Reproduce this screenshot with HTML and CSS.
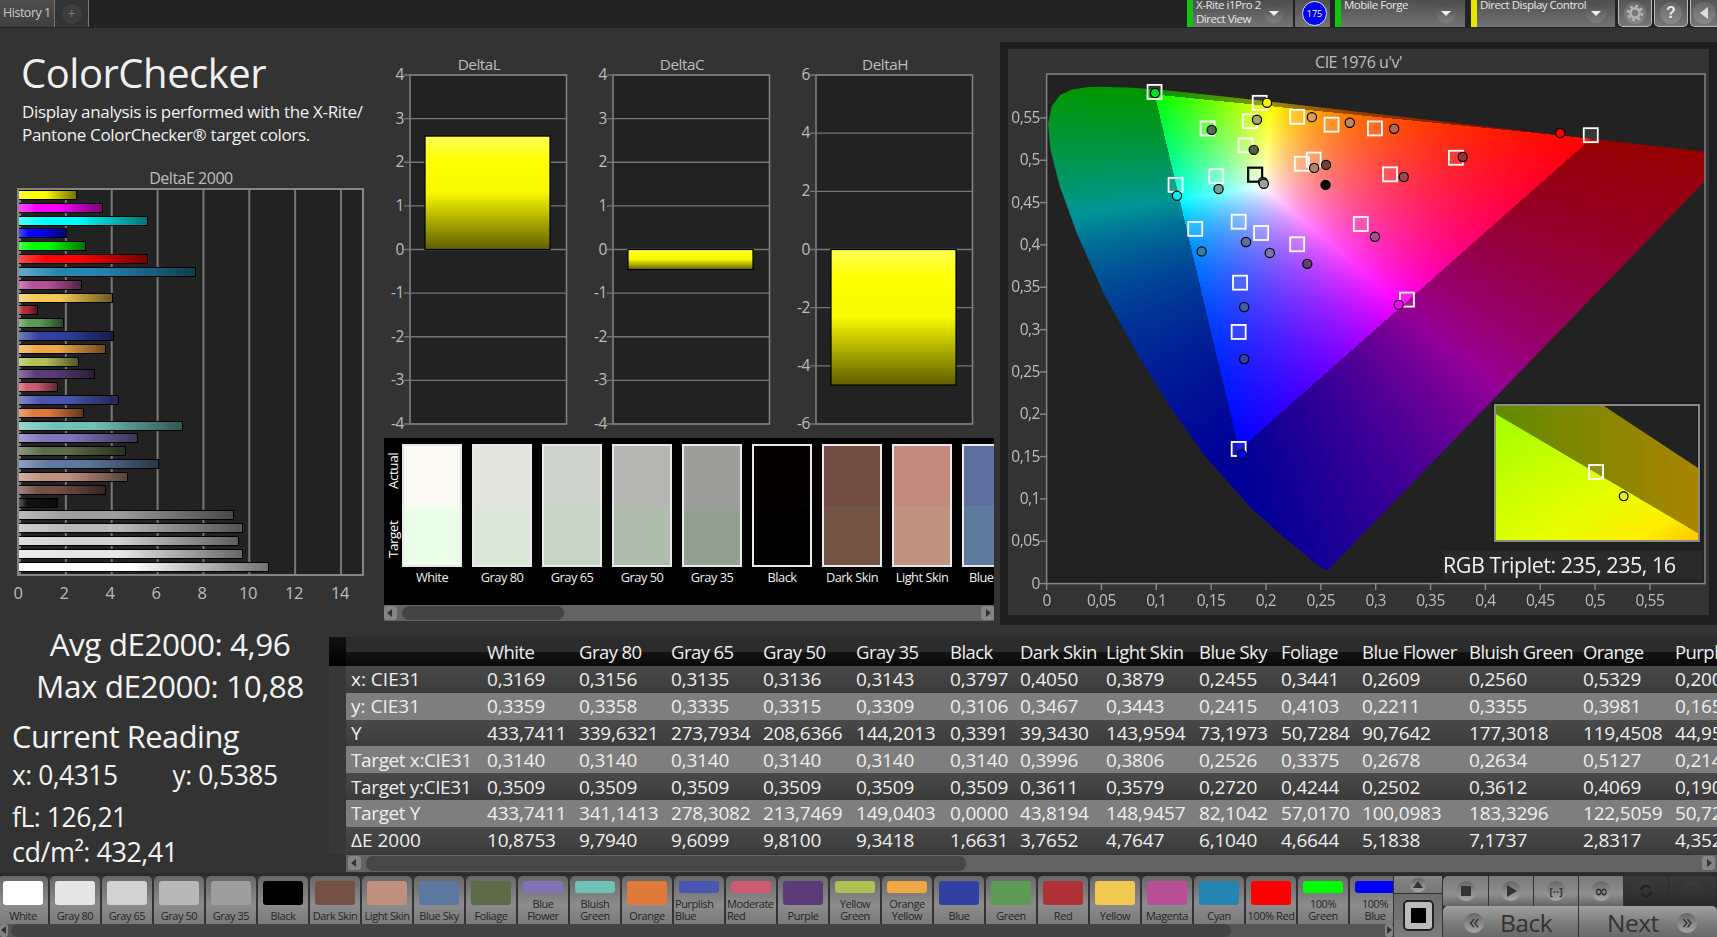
FILE: index.html
```html
<!DOCTYPE html>
<html lang="en">
<head>
    <meta charset="UTF-8">
    <title>ColorChecker</title>
    <link rel="stylesheet" href="styles.css">
</head>
<body>
    <header class="topbar">
        <div class="tabs">
            <div class="tab">History 1</div>
            <div class="tab-add"><span>+</span></div>
        </div>
        <div class="top-controls">
            <div class="drop drop-device stripe-green">
                <span>X-Rite i1Pro 2<br>Direct View</span>
                <i class="drop-btn"></i>
            </div>
            <div class="badge-box"><span class="badge">175</span></div>
            <div class="drop drop-forge stripe-green">
                <span>Mobile Forge</span>
                <i class="drop-btn"></i>
            </div>
            <div class="drop drop-display stripe-yellow">
                <span>Direct Display Control</span>
                <i class="drop-btn"></i>
            </div>
            <button class="tool-btn">
                <i class="tool-circle">
                    <svg width="18" height="18" viewBox="0 0 18 18">
                        <circle cx="9" cy="9" r="4.6" fill="none" stroke="#b4b4b4" stroke-width="2.6"/>
                        <circle cx="9" cy="9" r="7" fill="none" stroke="#b4b4b4" stroke-width="2.6" stroke-dasharray="2.9 2.6"/>
                    </svg>
                </i>
            </button>
            <button class="tool-btn"><i class="tool-circle help">?</i></button>
            <button class="tool-btn tool-last">
                <i class="tool-circle">
                    <svg width="12" height="14" viewBox="0 0 12 14"><path d="M10 1 L2 7 L10 13 Z" fill="#ddd"/></svg>
                </i>
            </button>
        </div>
    </header>

    <main class="workspace">
        <section class="intro">
            <h1>ColorChecker</h1>
            <p class="intro-text">Display analysis is performed with the X-Rite/<br>Pantone ColorChecker® target colors.</p>
            <h2 class="chart-title">DeltaE 2000</h2>
            <div class="de-plot" id="dePlot"></div>
            <div class="de-axis">
                <span>0</span><span>2</span><span>4</span><span>6</span><span>8</span><span>10</span><span>12</span><span>14</span>
            </div>
        </section>

        <section class="middle">
            <div class="delta-row" id="deltaRow"></div>
            <div class="patches">
                <div class="patch-side"><span>Actual</span><span>Target</span></div>
                <div class="patch-row" id="patchRow"></div>
            </div>
            <div class="scrollbar sb-patches">
                <i class="sb-btn sb-left"></i><i class="sb-thumb"></i><i class="sb-fill"></i><i class="sb-btn sb-right"></i>
            </div>
        </section>

        <section class="cie-outer">
            <div class="cie-panel">
                <div class="cie-title">CIE 1976 u'v'</div>
                <canvas id="gamut" class="gamut" width="658" height="510"></canvas>
                <svg id="cieSvg" class="cie-svg" width="701" height="566" viewBox="0 0 701 566"></svg>
                <div class="triplet">RGB Triplet: 235, 235, 16</div>
            </div>
        </section>
    </main>

    <section class="lower">
        <div class="readouts">
            <div class="avg">Avg dE2000: 4,96</div>
            <div class="max">Max dE2000: 10,88</div>
            <div class="current">Current Reading</div>
            <div class="xy"><span>x: 0,4315</span><span>y: 0,5385</span></div>
            <div class="fl">fL: 126,21</div>
            <div class="cd">cd/m²: 432,41</div>
        </div>
        <div class="table-wrap">
            <table class="data-table">
                <colgroup id="tableCols"></colgroup>
                <thead id="tableHead"></thead>
                <tbody id="tableBody"></tbody>
            </table>
            <div class="scrollbar sb-table">
                <i class="sb-btn sb-left"></i><i class="sb-thumb"></i><i class="sb-fill"></i><i class="sb-btn sb-right"></i>
            </div>
        </div>
    </section>

    <footer class="footer">
        <div class="strip-area">
            <div class="strip" id="strip"></div>
            <div class="scrollbar sb-strip">
                <i class="sb-btn sb-left"></i><i class="sb-thumb"></i><i class="sb-fill"></i><i class="sb-btn sb-right"></i>
            </div>
        </div>
        <div class="size-panel">
            <div class="size-up"><i class="round small"><svg width="10" height="7" viewBox="0 0 10 7"><path d="M5 0 L10 7 L0 7 Z" fill="#333"/></svg></i></div>
            <div class="size-knob"><div class="knob"><i></i></div></div>
        </div>
        <div class="nav-panel">
            <div class="transport">
                <div class="cell"><i class="round"><svg width="10" height="10"><rect width="10" height="10" fill="#333"/></svg></i></div>
                <div class="cell"><i class="round"><svg width="11" height="12" viewBox="0 0 11 12"><path d="M1 0 L11 6 L1 12 Z" fill="#333"/></svg></i></div>
                <div class="cell"><i class="round bracket">[··]</i></div>
                <div class="cell"><i class="round infinity">∞</i></div>
                <div class="cell cell-dark"><i class="round round-dark">
                    <svg width="14" height="14" viewBox="0 0 14 14"><path d="M2 6 A5 5 0 0 1 11 4 M12 8 A5 5 0 0 1 3 10" fill="none" stroke="#222" stroke-width="2.4"/></svg>
                </i></div>
                <div class="cell cell-dark"><i class="round round-dark"></i></div>
            </div>
            <div class="steps">
                <div class="step step-back"><i class="round chev">«</i><span>Back</span></div>
                <div class="step step-next"><span>Next</span><i class="round chev">»</i></div>
            </div>
        </div>
    </footer>

    <script>
        // top to bottom, value is the pixel where the bar ends
        const deBars = [
            ['#ffff00', 76], ['#ff00ff', 102], ['#00ffff', 147], ['#0000ff', 66], ['#00ff00', 85], ['#ff0000', 147],
            ['#2585b0', 195], ['#b85098', 81], ['#f2c850', 112], ['#b03038', 37], ['#5d9a55', 63], ['#3040a0', 113],
            ['#f0a845', 105], ['#b0c055', 78], ['#5c3c78', 94], ['#d05a70', 57], ['#4a57b0', 118], ['#e07a3a', 83],
            ['#70c0b8', 182], ['#8272b8', 137], ['#5c6b47', 125], ['#5d78a0', 158], ['#c0907f', 127], ['#755045', 105],
            ['#111111', 57], ['#9e9e9e', 233], ['#b9b9b9', 242], ['#d2d2d2', 238], ['#e6e6e6', 242], ['#ffffff', 268]
        ];
        document.getElementById('dePlot').innerHTML = deBars.map(b =>
            `<div class="de-bar" style="width:${b[1] - 18}px;background-color:${b[0]}"></div>`).join('');

        function renderDelta(name, max, barTop, barBottom) {
            const y = v => 47 + (max - v) * 349 / (2 * max);
            const step = max > 4 ? 2 : 1;
            let out = `<text class="dl-title" x="94" y="42">${name}</text>`;
            out += '<rect class="dl-frame" x="25" y="47" width="156.5" height="349"/>';
            for (let v = max; v >= -max; v -= step) {
                out += `<line class="dl-line" x1="19" x2="181.5" y1="${y(v)}" y2="${y(v)}"/>`;
                out += `<text class="dl-label" x="19" y="${y(v) + 5}">${v}</text>`;
            }
            out += `<rect x="40" y="${y(barTop)}" width="125" height="${y(barBottom) - y(barTop)}" fill="url(#yellowBar)" stroke="#000" stroke-width="1.2"/>`;
            return `<svg class="delta-chart" width="203" height="410">${out}</svg>`;
        }
        document.getElementById('deltaRow').innerHTML =
            `<svg width="0" height="0" class="defs"><defs><linearGradient id="yellowBar" x1="0" y1="0" x2="0" y2="1">
                <stop offset="0" stop-color="#ffff55"/><stop offset=".22" stop-color="#ffff00"/>
                <stop offset=".5" stop-color="#f8f800"/><stop offset="1" stop-color="#5e5e00"/>
            </linearGradient></defs></svg>` +
            renderDelta('DeltaL', 4, 2.6, 0) + renderDelta('DeltaC', 4, 0, -0.46) + renderDelta('DeltaH', 6, 0, -4.66);

        const patches = [
            ['White', '#fbfaf4', '#ecffe9'], ['Gray 80', '#e4e5df', '#dbe8d8'], ['Gray 65', '#cfd1cd', '#c6d5c3'],
            ['Gray 50', '#b6b7b4', '#aebdac'], ['Gray 35', '#9d9d9c', '#94a092'], ['Black', '#070202', '#000000'],
            ['Dark Skin', '#734c43', '#735445'], ['Light Skin', '#c48a7e', '#be947e'], ['Blue Sky', '#5f6ea0', '#5d7c9b']
        ];
        document.getElementById('patchRow').innerHTML = patches.map(p => `
            <div class="patch">
                <div class="patch-box"><i style="background:${p[1]}"></i><i style="background:${p[2]}"></i></div>
                <div class="patch-name">${p[0]}</div>
            </div>`).join('');

        // CIE diagram. Positions of the markers read in panel pixels
        const sx = z => z / 2.187 - 8;
        const sy = z => z / 2.658 - 9;
        const U = u => 38.6 + 1097 * u;
        const V = v => 534.6 - 846.7 * v;
        const squares = [[338,138],[568,167],[650,204],[725,225],[820,235],[454,235],[546,216],[537,280],[1292,253],[997,313],
            [686,318],[660,329],[853,357],[473,362],[384,385],[427,502],[522,483],[571,513],[789,489],[650,543],[525,645],
            [890,690],[522,776],[522,1087]];
        const dots = [[339,141,'#00e020'],[584,167,'#f0f000'],[682,205,'#d8a050'],[765,220,'#c08858'],[862,236,'#b86848'],
            [463,239,'#507050'],[562,212,'#a8a860'],[555,292,'#506040'],[1225,247,'#f00000'],[1012,311,'#a03030'],[713,332,'#704040'],
            [687,340,'#b08070'],[883,364,'#a04850'],[575,377,'#505050'],[577,382,'#a0a0a0'],[478,396,'#70a098'],[387,414,'#00f0f0'],
            [712,385,'#000000'],[820,523,'#a05090'],[538,537,'#607098'],[441,562,'#3080a0'],[590,566,'#7878a8'],[672,595,'#604070'],
            [534,710,'#4060a0'],[872,704,'#ff00ff'],[534,848,'#3040a0'],[529,1102,'#0000f0']];

        let cie = `<defs>
            <linearGradient id="insetBright" x1="0" y1="0" x2="1" y2="1">
                <stop offset="0" stop-color="#a2ff00"/><stop offset=".6" stop-color="#e6ff00"/><stop offset=".85" stop-color="#ffee00"/><stop offset="1" stop-color="#ffc400"/>
            </linearGradient>
            <linearGradient id="insetDark" x1="0" y1="0" x2="1" y2="0">
                <stop offset="0" stop-color="#628a00"/><stop offset="1" stop-color="#a88400"/>
            </linearGradient>
        </defs>`;
        cie += `<rect class="cie-frame" x="38.6" y="25" width="658.4" height="509.6"/>`;
        for (let i = 0; i <= 11; i++) {
            const t = (i * 0.05).toFixed(2).replace(/0$/, '').replace('.', ',');
            const label = i === 0 ? '0' : t;
            const px = U(i * 0.05), py = V(i * 0.05);
            cie += `<line class="tick" x1="${px}" x2="${px}" y1="534" y2="541"/>`;
            cie += `<text class="tick-x" x="${px}" y="557">${label}</text>`;
            cie += `<line class="tick" x1="32" x2="39" y1="${py}" y2="${py}"/>`;
            cie += `<text class="tick-y" x="32" y="${py + 5}">${label}</text>`;
        }
        squares.forEach(s => {
            cie += `<rect class="sq" x="${sx(s[0]) - 7}" y="${sy(s[1]) - 7}" width="14" height="14"/>`;
        });
        cie += `<rect class="sq sq-current" x="${sx(558) - 7}" y="${sy(358) - 7}" width="14" height="14"/>`;
        dots.forEach(d => {
            cie += `<circle class="dot" cx="${sx(d[0])}" cy="${sy(d[1])}" r="4.6" fill="${d[2]}"/>`;
        });
        // zoomed corner
        cie += `<rect x="486" y="355" width="205" height="137" fill="#222" stroke="#1a1a1a" stroke-width="4"/>
            <polygon points="488,357 596,357 690,419 690,484 488,365" fill="url(#insetDark)"/>
            <polygon points="488,365 690,484 690,491 488,491" fill="url(#insetBright)"/>
            <rect x="487" y="356" width="204" height="136" fill="none" stroke="#8a8a8a" stroke-width="2"/>
            <rect class="sq" x="581" y="416" width="14" height="14"/>
            <circle class="dot" cx="${sx(1364)}" cy="${sy(1213)}" r="4.4" fill="#e8ec10"/>`;
        document.getElementById('cieSvg').innerHTML = cie;

        const locus = [[.2568,.0165],[.2522,.0169],[.2347,.035],[.2161,.0549],[.1877,.0871],[.1441,.151],[.1147,.2044],[.0828,.2708],
            [.0521,.3427],[.0282,.4117],[.0119,.4698],[.0035,.5131],[.0014,.5432],[.0046,.5638],[.0123,.577],[.0231,.5837],[.036,.5861],
            [.0501,.5868],[.0792,.5856],[.1127,.5821],[.1531,.5766],[.2026,.5694],[.2623,.5604],[.3315,.5501],[.4035,.5393],[.5203,.5219],
            [.6005,.5099],[.6234,.5065]];
        const ctx = document.getElementById('gamut').getContext('2d');
        const img = ctx.createImageData(658, 510);
        const tone = 0.95;
        for (let y = 0; y < 510; y++) {
            for (let x = 0; x < 658; x++) {
                const u = (x + .5 + .4) / 1097;
                const v = (509.6 - y - .5) / 846.7;
                const X = 9 * u / (4 * v), Z = (12 - 3 * u - 20 * v) / (4 * v);
                let r = 2.4935 * X - .9314 - .4027 * Z;
                let g = -.8295 * X + 1.7627 + .0236 * Z;
                let b = .0358 * X - .0762 + .9569 * Z;
                const inside = r >= 0 && g >= 0 && b >= 0;
                r = Math.max(r, 0); g = Math.max(g, 0); b = Math.max(b, 0);
                const m = Math.max(r, g, b) || 1;
                const k = (inside ? 255 : 150);
                const i = (y * 658 + x) * 4;
                img.data[i] = k * Math.pow(r / m, tone);
                img.data[i + 1] = k * Math.pow(g / m, tone);
                img.data[i + 2] = k * Math.pow(b / m, tone);
                img.data[i + 3] = 255;
            }
        }
        ctx.putImageData(img, 0, 0);
        ctx.globalCompositeOperation = 'destination-in';
        ctx.beginPath();
        locus.forEach((p, i) => {
            const px = p[0] * 1097 - .4, py = 509.6 - p[1] * 846.7;
            if (i === 0) ctx.moveTo(px, py); else ctx.lineTo(px, py);
        });
        ctx.closePath();
        ctx.fill();

        // table
        const colWidths = [17, 138, 92, 92, 92, 93, 94, 70, 86, 93, 82, 81, 107, 114, 92, 45];
        document.getElementById('tableCols').innerHTML = colWidths.map(w => `<col style="width:${w}px">`).join('');
        const heads = ['White','Gray 80','Gray 65','Gray 50','Gray 35','Black','Dark Skin','Light Skin','Blue Sky','Foliage','Blue Flower','Bluish Green','Orange','Purple'];
        document.getElementById('tableHead').innerHTML =
            `<tr><th class="gutter"></th><th></th>${heads.map(h => `<th>${h}</th>`).join('')}</tr>`;
        const rows = [
            ['x: CIE31','0,3169 0,3156 0,3135 0,3136 0,3143 0,3797 0,4050 0,3879 0,2455 0,3441 0,2609 0,2560 0,5329 0,2006'],
            ['y: CIE31','0,3359 0,3358 0,3335 0,3315 0,3309 0,3106 0,3467 0,3443 0,2415 0,4103 0,2211 0,3355 0,3981 0,1655'],
            ['Y','433,7411 339,6321 273,7934 208,6366 144,2013 0,3391 39,3430 143,9594 73,1973 50,7284 90,7642 177,3018 119,4508 44,9512'],
            ['Target x:CIE31','0,3140 0,3140 0,3140 0,3140 0,3140 0,3140 0,3996 0,3806 0,2526 0,3375 0,2678 0,2634 0,5127 0,2140'],
            ['Target y:CIE31','0,3509 0,3509 0,3509 0,3509 0,3509 0,3509 0,3611 0,3579 0,2720 0,4244 0,2502 0,3612 0,4069 0,1900'],
            ['Target Y','433,7411 341,1413 278,3082 213,7469 149,0403 0,0000 43,8194 148,9457 82,1042 57,0170 100,0983 183,3296 122,5059 50,7200'],
            ['ΔE 2000','10,8753 9,7940 9,6099 9,8100 9,3418 1,6631 3,7652 4,7647 6,1040 4,6644 5,1838 7,1737 2,8317 4,3520']
        ];
        document.getElementById('tableBody').innerHTML = rows.map(r =>
            `<tr><td class="gutter"></td><td class="row-name${r[0].startsWith('Target') ? ' row-target' : ''}">${r[0]}</td>${r[1].split(' ').map(v => `<td>${v}</td>`).join('')}</tr>`).join('');

        // bottom strip
        const strip = [
            ['White','#ffffff'],['Gray 80','#e6e6e6'],['Gray 65','#d2d2d2'],['Gray 50','#b9b9b9'],['Gray 35','#9e9e9e'],['Black','#000000'],
            ['Dark Skin','#755045'],['Light Skin','#c0907f'],['Blue Sky','#5d78a0'],['Foliage','#5c6b47'],['Blue<br>Flower','#8272b8'],
            ['Bluish<br>Green','#70c0b8'],['Orange','#e07a3a'],['Purplish<br>Blue','#4a57b0',1],['Moderate<br>Red','#d05a70',1],['Purple','#5c3c78'],
            ['Yellow<br>Green','#b0c055'],['Orange<br>Yellow','#f0a845'],['Blue','#3040a0'],['Green','#5d9a55'],['Red','#b03038'],
            ['Yellow','#f2c850'],['Magenta','#b85098'],['Cyan','#2585b0'],['100% Red','#ff0000'],['100%<br>Green','#00ff00'],['100%<br>Blue','#0000ff']
        ];
        document.getElementById('strip').innerHTML = strip.map(s => `
            <div class="chip${s[0].includes('<br>') ? ' chip-two' : ''}${s[2] ? ' chip-left' : ''}">
                <i style="background:${s[1]}"></i>
                <span>${s[0]}</span>
            </div>`).join('');
    </script>
</body>
</html>
```

FILE: styles.css
```css
:root {
    --bg-color: #333333;
    --plot-bg: #222222;
    --frame: #858585;
    --label: #bdbdbd;
    --text: #f0f0f0;
    --ui-font: "Open Sans", "Noto Sans", sans-serif;
}

* {
    margin: 0;
    padding: 0;
    box-sizing: border-box;
}

body {
    width: 1717px;
    height: 937px;
    overflow: hidden;
    background-color: var(--bg-color);
    color: var(--text);
    font-family: var(--ui-font);
    letter-spacing: -0.03em;
}

i {
    display: block;
    font-style: normal;
}

/* Top bar */
.topbar {
    height: 28px;
    background-color: #232323;
    display: flex;
    justify-content: space-between;
}

.tabs {
    display: flex;
    height: 27px;
}

.tab {
    width: 55px;
    background: linear-gradient(#4e4e4e, #3f3f3f);
    border-right: 1px solid #777;
    font-size: 12.5px;
    line-height: 26px;
    padding-left: 3px;
    color: #c8c8c8;
}

.tab-add {
    width: 34px;
    background: #333;
    border-right: 1px solid #777;
    display: flex;
    align-items: center;
    justify-content: center;
}

.tab-add span {
    width: 20px;
    height: 20px;
    border-radius: 50%;
    background: #3d3d3d;
    color: #777;
    font-size: 14px;
    line-height: 19px;
    text-align: center;
}

.top-controls {
    display: flex;
    height: 27px;
    margin-right: 0;
}

.drop {
    position: relative;
    background: linear-gradient(#4e4e4e, #747474);
    border-left: 6px solid #10c010;
    font-size: 11.5px;
    line-height: 14px;
    color: #e6e6e6;
    padding: 0 0 0 3px;
}

.drop span {
    display: block;
    margin-top: -2px;
}

.stripe-green { border-left-color: #12c412; }
.stripe-yellow { border-left-color: #e6e600; }

.drop-device { width: 106px; margin-right: 2px; }
.drop-forge { width: 130px; margin-right: 6px; padding-left: 3px; }
.drop-display { width: 144px; margin-right: 3px; padding-left: 3px; }

.drop-btn {
    position: absolute;
    right: 9px;
    top: 3px;
    width: 20px;
    height: 20px;
    border-radius: 50%;
    background: linear-gradient(#4c4c4c, #808080);
}

.drop-btn::after {
    content: "";
    position: absolute;
    left: 5px;
    top: 8px;
    border-left: 5px solid transparent;
    border-right: 5px solid transparent;
    border-top: 5px solid #eee;
}

.badge-box {
    width: 35px;
    margin-right: 5px;
    padding-left: 4px;
    background: linear-gradient(#4e4e4e, #747474);
    display: flex;
    align-items: center;
    justify-content: center;
}

.badge {
    width: 25px;
    height: 25px;
    border-radius: 50%;
    background: #0000ee;
    border: 1px solid #dde;
    color: #fff;
    font-size: 9px;
    line-height: 23px;
    text-align: center;
    letter-spacing: 0;
}

.tool-btn {
    width: 34px;
    height: 27px;
    margin-right: 2px;
    background: linear-gradient(#555, #777);
    border: 1px solid #bbb;
    border-top: none;
    border-radius: 0 0 5px 5px;
    display: flex;
    align-items: center;
    justify-content: center;
}

.tool-last {
    width: 27px;
    margin-right: 0;
    border-right: none;
    border-radius: 0 0 0 5px;
}

.tool-circle {
    width: 22px;
    height: 22px;
    border-radius: 50%;
    background: linear-gradient(#666, #8a8a8a);
    display: flex;
    align-items: center;
    justify-content: center;
}

.help {
    color: #e8e8e8;
    font: bold 16px "Liberation Sans", sans-serif;
}

/* Main area */
.workspace {
    display: grid;
    grid-template-columns: 384px 616px 717px;
    height: 597px;
}

.intro {
    padding-top: 20px;
}

.intro h1 {
    font-size: 40px;
    font-weight: 400;
    line-height: 50px;
    padding-left: 21px;
}

.intro-text {
    font-size: 17px;
    letter-spacing: -0.02em;
    line-height: 23px;
    padding: 2px 0 0 22px;
    white-space: nowrap;
}

.chart-title {
    font-size: 16px;
    font-weight: 400;
    line-height: 20px;
    margin-top: 22px;
    text-align: center;
    width: 382px;
    color: var(--label);
}

.de-plot {
    width: 347px;
    height: 388px;
    margin-left: 17px;
    border: 2px solid var(--frame);
    background: linear-gradient(90deg, #777 2px, transparent 2px) 0 0 / 45.86px 100%, var(--plot-bg);
    display: flex;
    flex-direction: column;
    justify-content: space-between;
    padding: 0 0 2px;
}

.de-bar {
    height: 10px;
    border: 1px solid #000;
    border-left: none;
    background-image: linear-gradient(90deg, rgba(255,255,255,.3), rgba(255,255,255,0) 22%, rgba(0,0,0,0) 45%, rgba(0,0,0,.55));
}

.de-axis {
    display: flex;
    margin: 6px 0 0 -5px;
}

.de-axis span {
    width: 46px;
    text-align: center;
    font-size: 16.5px;
    line-height: 22px;
    color: var(--label);
}

.middle {
    display: flex;
    flex-direction: column;
}

.delta-row {
    display: flex;
    height: 410px;
    margin-left: 1px;
}

.defs {
    position: absolute;
}

.delta-chart {
    flex: none;
}

.dl-title {
    font-size: 15.3px;
    fill: var(--label);
    text-anchor: middle;
}

.dl-frame {
    fill: var(--plot-bg);
    stroke: var(--frame);
    stroke-width: 1.5;
}

.dl-line {
    stroke: #767676;
    stroke-width: 1.4;
}

.dl-label {
    font-size: 15.5px;
    fill: var(--label);
    text-anchor: end;
}

.patches {
    height: 167px;
    width: 610px;
    background: #000;
    display: flex;
    overflow: hidden;
}

.patch-side {
    width: 18px;
    flex: none;
    padding-top: 15px;
    display: flex;
    flex-direction: column;
    gap: 33px;
    align-items: center;
}

.patch-side span {
    writing-mode: vertical-rl;
    transform: rotate(180deg);
    font-size: 13.5px;
    line-height: 17px;
    height: 36px;
    white-space: nowrap;
    text-align: center;
    color: #fff;
}

.patch-row {
    display: flex;
    gap: 10px;
    padding-top: 6px;
}

.patch {
    width: 60px;
    flex: none;
}

.patch-box {
    height: 123px;
    border: 2px solid #e8e8e8;
    display: flex;
    flex-direction: column;
}

.patch-box i {
    flex: 1;
}

.patch-name {
    font-size: 12.8px;
    line-height: 18px;
    margin-top: 1px;
    text-align: center;
    white-space: nowrap;
    color: #f0f0f0;
}

/* Scrollbars */
.scrollbar {
    display: flex;
    align-items: center;
    background: #636363;
    height: 16px;
    padding: 1px 0;
    width: 610px;
}

.sb-btn {
    width: 13px;
    height: 14px;
    flex: none;
    background: #858585;
    border-radius: 3px;
    position: relative;
}

.sb-btn::after {
    content: "";
    position: absolute;
    top: 3px;
    border-top: 4px solid transparent;
    border-bottom: 4px solid transparent;
}

.sb-left::after {
    left: 3px;
    border-right: 5px solid #333;
}

.sb-right::after {
    right: 3px;
    border-left: 5px solid #333;
}

.sb-thumb {
    height: 14px;
    border-radius: 7px;
    background: #444;
    margin-left: 5px;
}

.sb-fill {
    flex: 1;
}

.sb-patches .sb-thumb {
    width: 162px;
}

.cie-outer {
    margin-top: 14px;
    height: 583px;
    background: #1f1f1f;
    padding: 7px 8px 0;
}

.cie-panel {
    position: relative;
    height: 566px;
    background: var(--bg-color);
}

.cie-title {
    text-align: center;
    font-size: 16px;
    line-height: 27px;
    color: var(--label);
    padding-right: 0;
}

.gamut {
    position: absolute;
    left: 39px;
    top: 25px;
    background: var(--plot-bg);
}

.cie-svg {
    position: absolute;
    left: 0;
    top: 0;
}

.cie-frame {
    fill: none;
    stroke: var(--frame);
    stroke-width: 1.5;
}

.tick {
    stroke: #8a8a8a;
    stroke-width: 1.4;
}

.tick-x,
.tick-y {
    font-size: 15.5px;
    fill: var(--label);
}

.tick-x { text-anchor: middle; }
.tick-y { text-anchor: end; }

.sq {
    fill: rgba(255,255,255,.1);
    stroke: #fff;
    stroke-width: 1.8;
}

.sq-current {
    fill: none;
    stroke: #000;
    stroke-width: 2.2;
}

.dot {
    stroke: #000;
    stroke-width: 1.2;
}

.triplet {
    position: absolute;
    left: 435px;
    top: 502px;
    width: 259px;
    height: 28px;
    background: #2a2a2a;
    font-size: 21.5px;
    line-height: 28px;
    white-space: nowrap;
    color: #f0f0f0;
}

/* Lower area */
.lower {
    display: grid;
    grid-template-columns: 329px 1388px;
    height: 248px;
}

.readouts {
    color: #f2f2f2;
    white-space: nowrap;
}

.avg,
.max {
    font-size: 31.5px;
    text-align: center;
    width: 340px;
}

.avg { line-height: 38px; }
.max { line-height: 42px; margin-top: 2px; }

.current,
.xy,
.fl,
.cd {
    padding-left: 12px;
}

.current {
    font-size: 30.8px;
    line-height: 38px;
    margin-top: 10px;
}

.xy {
    display: flex;
    gap: 55px;
    font-size: 26.4px;
    line-height: 36px;
    margin-top: 2px;
}

.fl {
    font-size: 26.6px;
    line-height: 34px;
    margin-top: 7px;
}

.cd {
    font-size: 27px;
    line-height: 36px;
}

.table-wrap {
    padding-top: 12px;
}

.data-table {
    width: 1388px;
    table-layout: fixed;
    border-collapse: collapse;
    font-size: 19px;
    letter-spacing: -0.01em;
    color: #eee;
}

.data-table th,
.data-table td {
    padding: 0 0 0 3px;
    text-align: left;
    font-weight: 400;
    white-space: nowrap;
    overflow: hidden;
}

.data-table thead tr {
    height: 29px;
    background: linear-gradient(#2c2c2c 50%, #141414 50%, #090909);
}

.data-table th {
    font-size: 18.5px;
    letter-spacing: -0.03em;
}

.data-table tbody tr {
    height: 26.8px;
    background: linear-gradient(#494949, #3b3b3b);
}

.data-table tbody tr:nth-child(even) {
    background: #7e7e7e;
}

.data-table .row-name {
    padding-left: 5px;
    letter-spacing: 0;
}

.data-table .row-target {
    letter-spacing: -0.02em;
}

.data-table .gutter {
    padding: 0;
    background: #373737;
}

.data-table thead .gutter {
    background: linear-gradient(#111, #000);
}

.sb-table {
    width: 1371px;
    margin: 1px 0 0 17px;
    height: 17px;
    padding: 1px 2px;
}

.sb-table .sb-thumb {
    width: 600px;
    height: 15px;
    background: #474747;
}

/* Bottom strip */
.footer {
    height: 64px;
    background: #2b2b2b;
    padding-top: 3px;
    display: grid;
    grid-template-columns: 1393px 50px 274px;
}

.strip-area {
    overflow: hidden;
}

.strip {
    display: flex;
    gap: 2px;
    height: 48px;
    margin-left: -2px;
    background: #333;
}

.chip {
    flex: none;
    width: 50px;
    height: 48px;
    border-radius: 5px 5px 0 0;
    background: linear-gradient(#676767, #8c8c8c 60%, #7a7a7a);
    padding-top: 5px;
    color: #262626;
    font-size: 11px;
    line-height: 12px;
    text-align: center;
    white-space: nowrap;
    letter-spacing: -0.04em;
}

.chip i {
    width: 40px;
    height: 24px;
    margin: 0 auto;
    border-radius: 3px;
}

.chip span {
    display: block;
    margin-top: 5px;
}

.chip-two i {
    height: 12px;
}

.chip-left {
    text-align: left;
}

.chip-left span {
    padding-left: 1px;
}

.sb-strip {
    width: 1393px;
    height: 13px;
    background: #555;
    padding: 0;
}

.sb-strip .sb-btn {
    width: 8px;
    height: 13px;
}

.sb-strip .sb-btn::after {
    top: 2px;
}

.sb-strip .sb-left::after {
    left: 1px;
}

.sb-strip .sb-right::after {
    right: 1px;
}

.sb-strip .sb-thumb {
    width: 1220px;
    height: 13px;
    margin-left: 3px;
    background: #434343;
}

.size-panel {
    background: linear-gradient(#666, #7c7c7c);
    border-left: 1px solid #333;
    border-right: 1px solid #333;
}

.size-up {
    height: 18px;
    background: linear-gradient(#858585, #777);
    border-bottom: 1px solid #333;
    display: flex;
    justify-content: center;
    align-items: center;
}

.size-knob {
    padding: 6px 0 0 9px;
}

.knob {
    width: 31px;
    height: 31px;
    border: 2px solid #222;
    border-radius: 5px;
    background: #bbb;
    padding: 6px 0 0 6px;
}

.knob i {
    width: 15px;
    height: 15px;
    background: #000;
}

.round {
    width: 20px;
    height: 20px;
    border-radius: 50%;
    background: linear-gradient(#666, #a8a8a8);
    display: flex;
    align-items: center;
    justify-content: center;
    flex: none;
    color: #333;
}

.round.small {
    width: 16px;
    height: 14px;
    border-radius: 8px;
}

.round-dark {
    background: linear-gradient(#3c3c3c, #2c2c2c);
}

.bracket {
    font-size: 11px;
    font-weight: 700;
    letter-spacing: 0;
}

.infinity {
    font: bold 17px "DejaVu Sans", sans-serif;
}

.transport {
    display: grid;
    grid-template-columns: 46px 45px 45px 45px 45px 48px;
    height: 30px;
}

.cell {
    background: linear-gradient(#7a7a7a, #8f8f8f 60%, #666);
    border-right: 1px solid #333;
    display: flex;
    align-items: center;
    justify-content: center;
}

.cell:first-child {
    border-radius: 5px 0 0 0;
}

.cell-dark {
    background: linear-gradient(#3a3a3a, #2b2b2b);
    border-right-color: #2b2b2b;
}

.steps {
    display: grid;
    grid-template-columns: 136px 138px;
    height: 31px;
}

.step {
    background: linear-gradient(#a0a0a0, #7a7a7a 55%, #666);
    display: flex;
    align-items: center;
    font-size: 24.5px;
    color: #333;
}

.step-back {
    border-right: 1px solid #333;
    border-radius: 5px 0 0 0;
    padding-left: 21px;
}

.step-back span {
    margin-left: 16px;
}

.step-next {
    border-radius: 0 5px 0 0;
    padding-left: 28px;
}

.step-next span {
    width: 70px;
}

.chev {
    font-size: 21px;
    line-height: 17px;
    padding-bottom: 3px;
}
```
